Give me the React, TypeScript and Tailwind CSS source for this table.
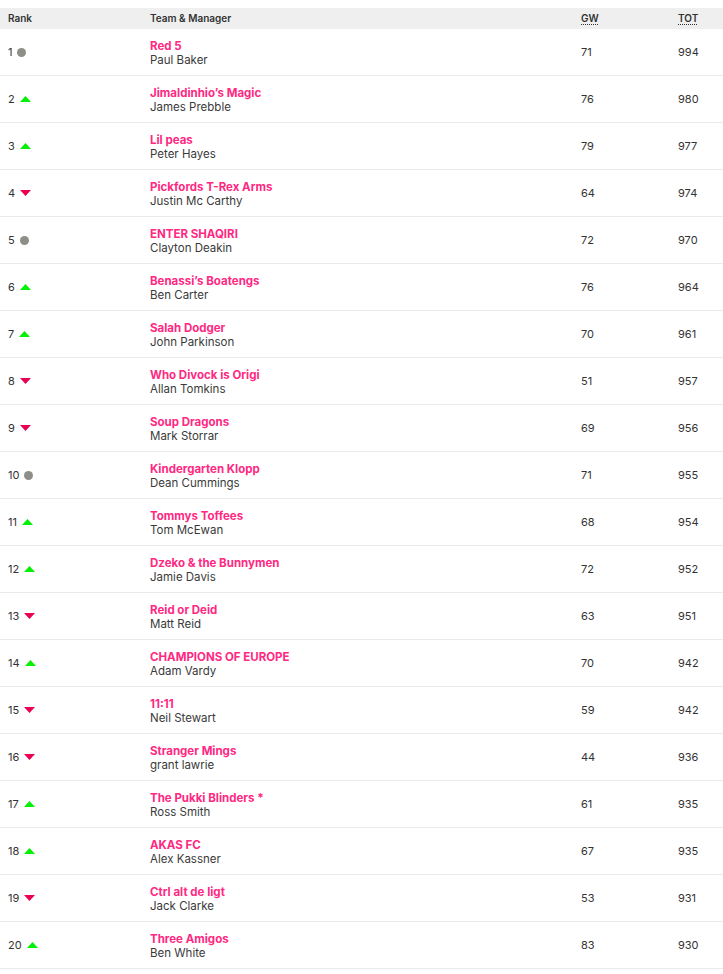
import React from "react";

type Move = "up" | "down" | "same";
const rows: [number, Move, string, string, number, number][] = [
  [1, "same", "Red 5", "Paul Baker", 71, 994],
  [2, "up", "Jimaldinhio’s Magic", "James Prebble", 76, 980],
  [3, "up", "Lil peas", "Peter Hayes", 79, 977],
  [4, "down", "Pickfords T-Rex Arms", "Justin Mc Carthy", 64, 974],
  [5, "same", "ENTER SHAQIRI", "Clayton Deakin", 72, 970],
  [6, "up", "Benassi’s Boatengs", "Ben Carter", 76, 964],
  [7, "up", "Salah Dodger", "John Parkinson", 70, 961],
  [8, "down", "Who Divock is Origi", "Allan Tomkins", 51, 957],
  [9, "down", "Soup Dragons", "Mark Storrar", 69, 956],
  [10, "same", "Kindergarten Klopp", "Dean Cummings", 71, 955],
  [11, "up", "Tommys Toffees", "Tom McEwan", 68, 954],
  [12, "up", "Dzeko & the Bunnymen", "Jamie Davis", 72, 952],
  [13, "down", "Reid or Deid", "Matt Reid", 63, 951],
  [14, "up", "CHAMPIONS OF EUROPE", "Adam Vardy", 70, 942],
  [15, "down", "11:11", "Neil Stewart", 59, 942],
  [16, "down", "Stranger Mings", "grant lawrie", 44, 936],
  [17, "up", "The Pukki Blinders *", "Ross Smith", 61, 935],
  [18, "up", "AKAS FC", "Alex Kassner", 67, 935],
  [19, "down", "Ctrl alt de ligt", "Jack Clarke", 53, 931],
  [20, "up", "Three Amigos", "Ben White", 83, 930],
];

function Indicator({ m }: { m: Move }) {
  if (m === "same")
    return <span className="inline-block w-[9px] h-[9px] rounded-full bg-[#8e8e88]" />;
  if (m === "up")
    return (
      <svg width="11" height="6" viewBox="0 0 11 6" className="block">
        <polygon points="5.5,0 11,6 0,6" fill="#05f005" />
      </svg>
    );
  return (
    <svg width="11" height="6" viewBox="0 0 11 6" className="block">
      <polygon points="0,0 11,0 5.5,6" fill="#e90052" />
    </svg>
  );
}

export default function App() {
  return (
    <div className="w-[723px] bg-white pt-2 text-[#333]" style={{ fontFamily: "Inter, 'Noto Sans', sans-serif" }}>
      <div className="grid grid-cols-[150px_1fr_97px_45px] h-[21px] items-center bg-[#efefef] text-[10px] font-semibold text-[#333]">
        <div className="pl-2">Rank</div>
        <div>Team &amp; Manager</div>
        <div>
          <span className="underline decoration-dotted underline-offset-2">GW</span>
        </div>
        <div>
          <span className="underline decoration-dotted underline-offset-2">TOT</span>
        </div>
      </div>
      {rows.map(([r, m, team, mgr, gw, tot]) => (
        <div
          key={r}
          className="grid grid-cols-[150px_1fr_97px_45px] h-[47px] items-center border-b border-[#ebebeb] text-[11px]"
        >
          <div className="pl-2 flex items-center gap-[5px]">
            <span>{r}</span>
            <Indicator m={m} />
          </div>
          <div className="flex flex-col leading-[14px] text-[11.5px] pt-[2px]">
            <span className="font-bold text-[#ff2882]">{team}</span>
            <span className="text-[#3a3a3a]">{mgr}</span>
          </div>
          <div>{gw}</div>
          <div>{tot}</div>
        </div>
      ))}
    </div>
  );
}
